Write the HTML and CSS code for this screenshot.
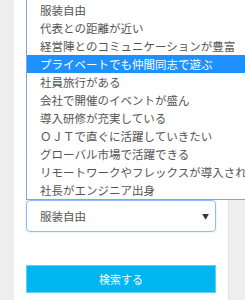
FILE: index.html
```html
<html>
<head>
<meta charset="utf-8">
<link rel="stylesheet" href="styles.css">
</head>
<body>
<div class="card">
  <div class="form-space"></div>
  <div class="form-select">
    <span class="select-value">服装自由</span>
    <span class="select-caret">▼</span>
  </div>
  <button class="form-button" type="button">検索する</button>
</div>
<ul class="option-list">
  <li class="option">服装自由</li>
  <li class="option">代表との距離が近い</li>
  <li class="option">経営陣とのコミュニケーションが豊富</li>
  <li class="option selected">プライベートでも仲間同志で遊ぶ</li>
  <li class="option">社員旅行がある</li>
  <li class="option">会社で開催のイベントが盛ん</li>
  <li class="option">導入研修が充実している</li>
  <li class="option">ＯＪＴで直ぐに活躍していきたい</li>
  <li class="option">グローバル市場で活躍できる</li>
  <li class="option">リモートワークやフレックスが導入されている</li>
  <li class="option">社長がエンジニア出身</li>
</ul>
</body>
</html>
```

FILE: styles.css
```css
body {
  margin: 0;
  background-color: #eeeeee;
  font-family: "Noto Sans CJK JP", "Noto Sans", sans-serif;
  overflow: hidden;
}

.card {
  margin-left: 14px;
  width: 190px;
  height: 300px;
  padding: 0 12px;
  background-color: #fff;
  border-right: 1px solid #e2e2e2;
}

.form-space {
  height: 200px;
}

.form-select {
  display: flex;
  align-items: center;
  justify-content: space-between;
  box-sizing: border-box;
  width: 190px;
  height: 32px;
  padding: 0 6px 0 13px;
  border: 1px solid #8dbdf2;
  border-radius: 4px;
  box-shadow: 0 0 2px rgba(100, 160, 240, 0.4);
  font-size: 11.5px;
  color: #555;
}

.select-caret {
  font-size: 7px;
  color: #333;
}

.form-button {
  display: block;
  width: 190px;
  height: 28px;
  margin-top: 33px;
  border: 1px solid #5fd0f6;
  background-color: #00b6f1;
  color: #fff;
  font-family: "Noto Sans CJK JP", "Noto Sans", sans-serif;
  font-size: 11px;
  padding: 0;
}

.option-list {
  position: absolute;
  top: 0;
  left: 26px;
  right: 0;
  margin: 0;
  padding: 1px 0 0 0;
  list-style: none;
  background-color: #fff;
  border: 1px solid #8aa4d6;
  border-top: none;
  border-right: none;
  overflow: hidden;
}

.option {
  height: 18px;
  line-height: 18px;
  padding-left: 13px;
  font-size: 11.5px;
  color: #555;
  white-space: nowrap;
}

.option.selected {
  background-color: #1e90ff;
  color: #fff;
}
```
